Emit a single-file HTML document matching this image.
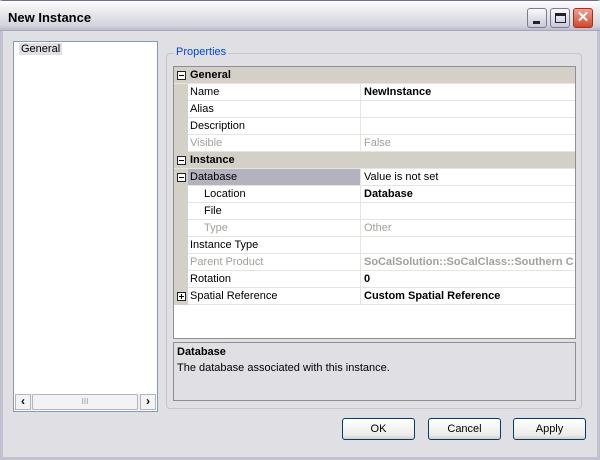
<!DOCTYPE html>
<html><head><style>
*{margin:0;padding:0;box-sizing:border-box}
body{width:600px;height:460px;overflow:hidden;font-family:"Liberation Sans",sans-serif;font-size:11px;background:#fff}
.win{position:absolute;left:0;top:0;width:600px;height:460px;background:#e0dfe3;border:1px solid #6e6d85;border-left:3px solid #c2c1cf;border-right:3px solid #c2c1cf;border-bottom:3px solid #c2c1cf}
.title{position:absolute;left:-3px;top:0;width:600px;height:30px;background:linear-gradient(#fdfdfe,#e8e8ee 40%,#d4d4de 85%,#bcbccb);border-bottom:1px solid #a8a7b8}
.title span{position:absolute;left:8px;top:9px;font-size:13px;font-weight:bold;color:#000}
.tb{position:absolute;top:7px;width:20px;height:20px;border:1px solid #7b7b96;border-radius:3px;background:linear-gradient(#fafafe,#c8c8d8)}
.tb.close{background:linear-gradient(#f0a090,#d04830);border-color:#a03020}
.list{position:absolute;left:10px;top:40px;width:145px;height:371px;background:#fff;border:1px solid #7f9db9}
.sb{position:absolute;left:1px;bottom:1px;width:141px;height:16px;background:#efeef2}
.arr{position:absolute;top:0;width:16px;height:16px;border:1px solid #b4b4c0;background:#f3f3f6;font-size:12px;text-align:center;line-height:13px;font-weight:bold}
.group{position:absolute;left:163px;top:52px;width:416px;height:356px;border:1px solid #c6c5ce;border-radius:4px}
.glabel{position:absolute;left:171px;top:45px;background:#e0dfe3;padding:0 2px;color:#0046d5}
.grid{position:absolute;left:170px;top:65px;width:403px;height:273px;background:#fff;border:1px solid #8e8e94}
.row{position:absolute;left:0;width:401px;height:17px;border-bottom:1px solid #e6e4dc}
.row .m{position:absolute;left:0;top:0;width:14px;height:17px;background:#d4d0c8}
.row .k{position:absolute;left:16px;top:2px}
.row .v{position:absolute;left:186px;top:0;height:16px;border-left:1px solid #e6e4dc;padding:2px 0 0 3px;width:215px;white-space:nowrap;overflow:hidden}
.cat{background:#d4d0c8;font-weight:bold}
.gr{color:#a0a09c}
.b{font-weight:bold}
.pm{position:absolute;left:3px;top:4px;width:9px;height:9px}
.desc{position:absolute;left:170px;top:341px;width:403px;height:59px;border:1px solid #8e8e94}
.btn{position:absolute;top:417px;width:73px;height:22px;border:1px solid #003c74;border-radius:3px;background:linear-gradient(#fff,#ececea 80%,#d6d0c5);text-align:center;line-height:20px;font-size:11px}
</style></head><body>
<div class="win">
<div class="title"><span>New Instance</span>
<div class="tb" style="left:527px"><div style="position:absolute;left:5px;top:12px;width:7px;height:3px;background:#222"></div></div>
<div class="tb" style="left:550px"><div style="position:absolute;left:4px;top:4px;width:11px;height:10px;border:1px solid #222;border-top-width:3px"></div></div>
<div class="tb close" style="left:573px;color:#fff;font-weight:bold;font-size:15px;text-align:center;line-height:18px">✕</div>
</div>
<div class="list"><div style="position:absolute;left:5px;top:1px;padding:0 2px;background:#e0dfe3">General</div>
<div class="sb"><div class="arr" style="left:0">&lsaquo;</div><div style="position:absolute;left:17px;top:0;width:106px;height:16px;border:1px solid #b4b4c0;border-radius:2px;background:#f3f3f6;text-align:center;font-size:8px;line-height:14px;color:#999">III</div><div class="arr" style="right:0">&rsaquo;</div></div></div>
<div class="group"></div>
<div class="glabel">Properties</div>
<div class="grid">
<div class="row cat" style="top:0"><svg class="pm" viewBox="0 0 9 9"><rect x=".5" y=".5" width="8" height="8" fill="#fff" stroke="#222"/><path d="M2 4.5h5" stroke="#000"/></svg><div class="k">General</div></div>
<div class="row" style="top:17px"><div class="m"></div><div class="k">Name</div><div class="v b">NewInstance</div></div>
<div class="row" style="top:34px"><div class="m"></div><div class="k">Alias</div><div class="v"></div></div>
<div class="row" style="top:51px"><div class="m"></div><div class="k">Description</div><div class="v"></div></div>
<div class="row" style="top:68px"><div class="m"></div><div class="k gr">Visible</div><div class="v gr">False</div></div>
<div class="row cat" style="top:85px"><svg class="pm" viewBox="0 0 9 9"><rect x=".5" y=".5" width="8" height="8" fill="#fff" stroke="#222"/><path d="M2 4.5h5" stroke="#000"/></svg><div class="k">Instance</div></div>
<div class="row" style="top:102px"><div class="m"></div><svg class="pm" viewBox="0 0 9 9"><rect x=".5" y=".5" width="8" height="8" fill="#fff" stroke="#222"/><path d="M2 4.5h5" stroke="#000"/></svg><div style="position:absolute;left:14px;top:0;width:172px;height:16px;background:#b3b3bf"></div><div class="k">Database</div><div class="v">Value is not set</div></div>
<div class="row" style="top:119px"><div class="m"></div><div class="k" style="left:30px">Location</div><div class="v b">Database</div></div>
<div class="row" style="top:136px"><div class="m"></div><div class="k" style="left:30px">File</div><div class="v"></div></div>
<div class="row" style="top:153px"><div class="m"></div><div class="k gr" style="left:30px">Type</div><div class="v gr">Other</div></div>
<div class="row" style="top:170px"><div class="m"></div><div class="k">Instance Type</div><div class="v"></div></div>
<div class="row" style="top:187px"><div class="m"></div><div class="k gr">Parent Product</div><div class="v gr b">SoCalSolution::SoCalClass::Southern C</div></div>
<div class="row" style="top:204px"><div class="m"></div><div class="k">Rotation</div><div class="v b">0</div></div>
<div class="row" style="top:221px"><div class="m"></div><svg class="pm" viewBox="0 0 9 9"><rect x=".5" y=".5" width="8" height="8" fill="#fff" stroke="#222"/><path d="M2 4.5h5M4.5 2v5" stroke="#000"/></svg><div class="k">Spatial Reference</div><div class="v b">Custom Spatial Reference</div></div>
</div>
<div class="desc"><div style="position:absolute;left:3px;top:3px;font-weight:bold">Database</div><div style="position:absolute;left:3px;top:19px">The database associated with this instance.</div></div>
<div class="btn" style="left:339px">OK</div>
<div class="btn" style="left:425px">Cancel</div>
<div class="btn" style="left:510px">Apply</div>
</div>
</body></html>
